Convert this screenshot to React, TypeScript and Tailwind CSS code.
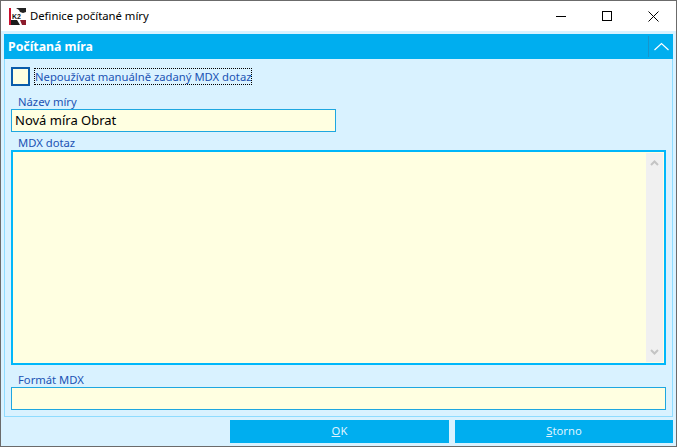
import React from 'react';

const baseFont = 'font-["Noto_Sans","Liberation_Sans",sans-serif]';

function K2Logo() {
  return (
    <svg width="17" height="17" viewBox="0 0 17 17" className="shrink-0">
      <rect x="0" y="0" width="17" height="17" fill="#ffffff" />
      <rect x="0" y="0" width="2" height="17" fill="#c8102e" />
      <path d="M7 0h10v4l-3 1-3-1-1-2z" fill="#222" />
      <path d="M2 12h6l3 5H2z" fill="#1c1c1c" />
      <path d="M11 12h6v5h-4z" fill="#8c1c2c" />
      <text x="3" y="10.5" fontSize="7" fontWeight="700" fontFamily="Liberation Sans, sans-serif" fill="#111">K2</text>
    </svg>
  );
}

function Field({ label, className, children }: { label: string; className?: string; children?: React.ReactNode }) {
  return (
    <div className={className}>
      <div className="pl-[7px] h-[15px] leading-[15px] text-[11.25px] text-[#2052b4]">{label}</div>
      {children}
    </div>
  );
}

export default function App() {
  return (
    <div className={`${baseFont} w-[677px] h-[447px] flex flex-col overflow-hidden border border-[#6b6b6b] bg-[#d9f2ff]`}>
      {/* title bar */}
      <div className="h-[30px] shrink-0 bg-white flex items-center">
        <div className="ml-[8px] mr-[4px] mt-[1px]">
          <K2Logo />
        </div>
        <span className="text-[11.3px] text-black">Definice počítané míry</span>
        <div className="ml-auto flex h-full">
          <div className="w-[46px] flex items-center justify-center">
            <div className="w-[10px] h-px bg-black" />
          </div>
          <div className="w-[46px] flex items-center justify-center">
            <div className="w-[10px] h-[10px] border border-black" />
          </div>
          <div className="w-[46px] flex items-center justify-center">
            <svg width="11" height="11" viewBox="0 0 11 11">
              <path d="M0.5 0.5l10 10M10.5 0.5l-10 10" stroke="#000" strokeWidth="1" fill="none" />
            </svg>
          </div>
        </div>
      </div>

      {/* panel */}
      <div className="flex-1 min-h-0 flex flex-col pt-[3px] pl-[3px] pr-[3px]">
        <div className="h-[383px] flex flex-col border border-[#8fdcff] border-t-0">
          <div className="h-[25px] shrink-0 -mx-px bg-[#00aeef] flex items-center pl-[4px]">
            <span className="pt-[1px] text-[12.3px] font-bold text-white">Počítaná míra</span>
            <div className="ml-auto flex items-center h-full">
              <div className="w-px h-[21px] bg-[#1795cc]" />
              <div className="w-[24px] flex items-center justify-center">
                <svg width="15" height="9" viewBox="0 0 15 9">
                  <path d="M0.5 8L7.5 1.5L14.5 8" stroke="#fff" strokeWidth="1.2" fill="none" />
                </svg>
              </div>
            </div>
          </div>

          <div className="flex-1 min-h-0 flex flex-col pl-[6px] pr-[6px] pt-[8px]">
            <div className="flex items-center h-[19px]">
              <div className="w-[19px] h-[19px] border-[2px] border-[#0a5cab] bg-[#ffffe1]" />
              <span className="ml-[4px] h-[17px] leading-[15px] border border-dotted border-black text-[11.25px] text-[#2052b4] whitespace-nowrap">
                Nepoužívat manuálně zadaný MDX dotaz
              </span>
            </div>

            <Field label="Název míry" className="mt-[8px]">
              <div className="w-[325px] h-[23px] border border-[#1ea7e0] bg-[#ffffe1] pl-[3px] leading-[20px] text-[13px] text-black">
                Nová míra Obrat
              </div>
            </Field>

            <Field label="MDX dotaz" className="mt-[3px]">
              <div className="h-[215px] border-[2px] border-[#00b7fa] bg-[#ffffe1] flex justify-end p-px">
                <div className="w-[17px] h-full bg-[#f0f0f0] flex flex-col items-center justify-between py-[6px]">
                  <svg width="9" height="7" viewBox="0 0 9 7">
                    <path d="M1 6L4.5 2.5L8 6" stroke="#c4c4c4" strokeWidth="2" fill="none" />
                  </svg>
                  <svg width="9" height="7" viewBox="0 0 9 7">
                    <path d="M1 1L4.5 4.5L8 1" stroke="#c4c4c4" strokeWidth="2" fill="none" />
                  </svg>
                </div>
              </div>
            </Field>

            <Field label="Formát MDX" className="mt-[7px]">
              <div className="h-[23px] border border-[#1ea7e0] bg-[#ffffe1]" />
            </Field>
          </div>
        </div>

        {/* buttons */}
        <div className="flex justify-end gap-[6px] mt-[3px]">
          <button className="w-[219px] h-[23px] bg-[#00aeef] text-[11.25px] text-[#dff4ff]">
            <span className="underline">O</span>K
          </button>
          <button className="w-[218px] h-[23px] bg-[#00aeef] text-[11.25px] text-[#dff4ff]">
            <span className="underline">S</span>torno
          </button>
        </div>
      </div>
    </div>
  );
}
